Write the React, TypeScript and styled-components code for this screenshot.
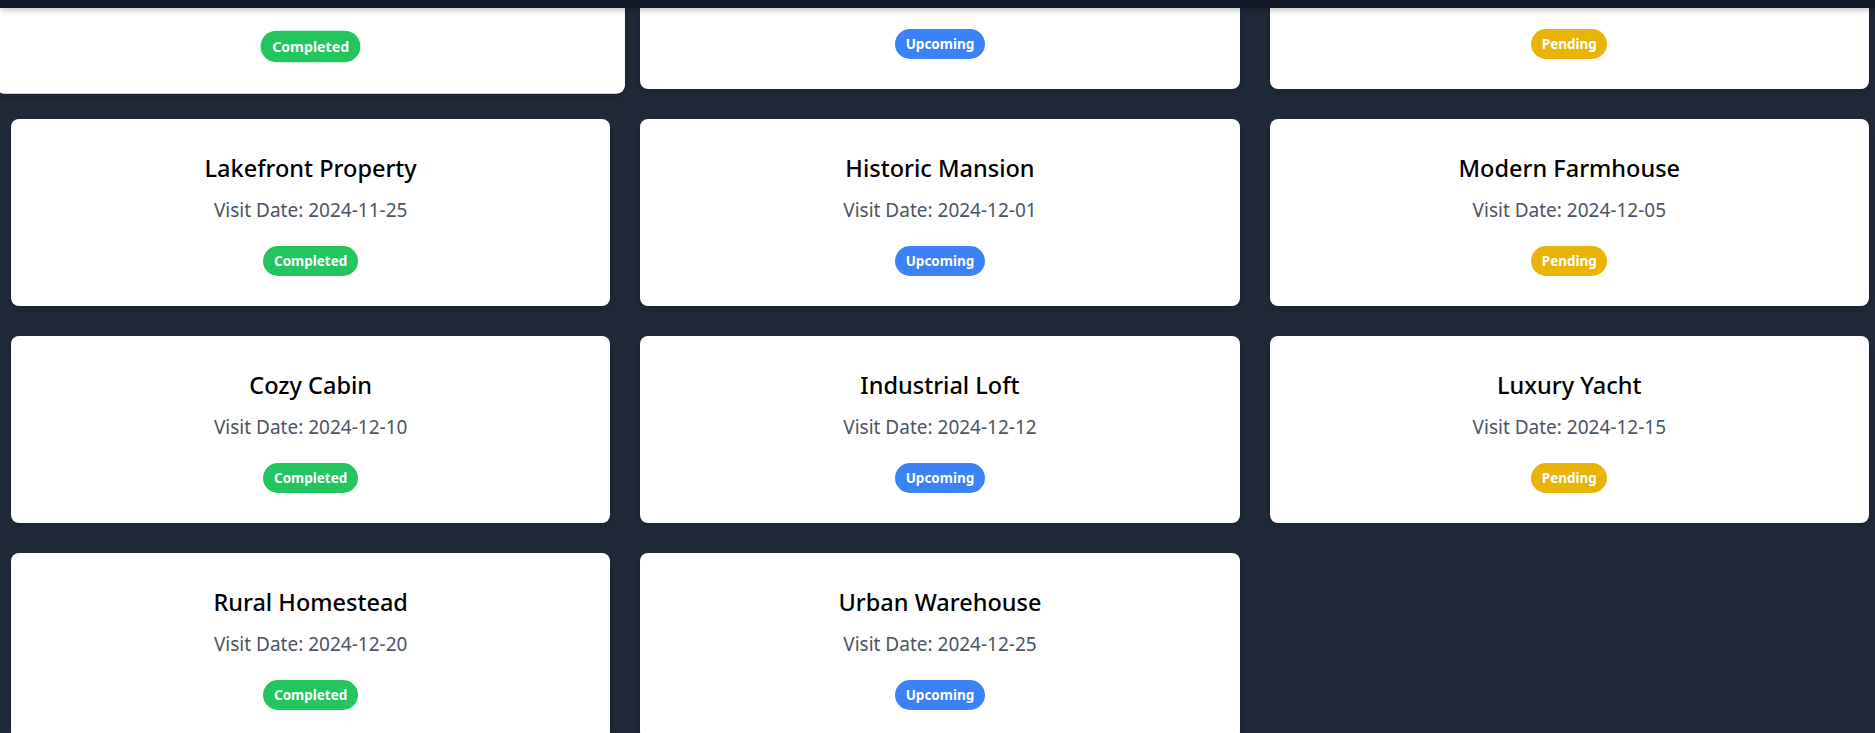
import React from "react";
import styled, { createGlobalStyle } from "styled-components";

type Status = "Completed" | "Upcoming" | "Pending";

interface Visit {
  id: number;
  title: string;
  date: string;
  status: Status;
}

const visits: Visit[] = [
  { id: 1, title: "Beachside Villa", date: "2024-11-10", status: "Completed" },
  { id: 2, title: "Downtown Condo", date: "2024-11-15", status: "Upcoming" },
  { id: 3, title: "Suburban Home", date: "2024-11-20", status: "Pending" },
  { id: 4, title: "Lakefront Property", date: "2024-11-25", status: "Completed" },
  { id: 5, title: "Historic Mansion", date: "2024-12-01", status: "Upcoming" },
  { id: 6, title: "Modern Farmhouse", date: "2024-12-05", status: "Pending" },
  { id: 7, title: "Cozy Cabin", date: "2024-12-10", status: "Completed" },
  { id: 8, title: "Industrial Loft", date: "2024-12-12", status: "Upcoming" },
  { id: 9, title: "Luxury Yacht", date: "2024-12-15", status: "Pending" },
  { id: 10, title: "Rural Homestead", date: "2024-12-20", status: "Completed" },
  { id: 11, title: "Urban Warehouse", date: "2024-12-25", status: "Upcoming" },
];

const statusColors: Record<Status, string> = {
  Completed: "#22c55e",
  Upcoming: "#3b82f6",
  Pending: "#eab308",
};

const GlobalStyle = createGlobalStyle`
  html, body {
    margin: 0;
    padding: 0;
    overflow: hidden;
    background: #1f2937;
    font-family: "Noto Sans", "Open Sans", sans-serif;
  }
  * { box-sizing: border-box; }
`;

const TopBar = styled.header`
  position: fixed;
  top: 0;
  left: 0;
  right: 0;
  height: 8px;
  background: #111827;
  box-shadow: 0 2px 6px rgba(0, 0, 0, 0.25);
  z-index: 10;
`;

const Page = styled.main`
  min-height: 100vh;
  background: #1f2937;
  padding: 0 6px 0 11px;
`;

const Grid = styled.section`
  display: grid;
  grid-template-columns: repeat(3, 1fr);
  gap: 30px;
  margin-top: -98px;
`;

const Card = styled.article<{ $hovered?: boolean }>`
  background: #ffffff;
  border-radius: 8px;
  padding: 33px 24px 30px;
  display: flex;
  flex-direction: column;
  align-items: center;
  text-align: center;
  box-shadow: 0 4px 6px rgba(0, 0, 0, 0.1);
  transform: ${(p) => (p.$hovered ? "scale(1.05)" : "none")};
  transition: transform 0.2s;
`;

const Title = styled.h2`
  margin: 0 0 12px;
  font-size: 23.5px;
  line-height: 32px;
  font-weight: 500;
  color: #000000;
`;

const VisitDate = styled.p`
  margin: 0 0 22px;
  font-size: 19px;
  line-height: 28px;
  font-weight: 400;
  color: #4b5563;
`;

const Badge = styled.span<{ $color: string }>`
  display: inline-flex;
  align-items: center;
  height: 30px;
  padding: 0 10.5px;
  border-radius: 9999px;
  background: ${(p) => p.$color};
  color: #ffffff;
  font-size: 13.5px;
  font-weight: 700;
`;

export default function App() {
  return (
    <>
      <GlobalStyle />
      <TopBar />
      <Page>
        <Grid>
          {visits.map((v, i) => (
            <Card key={v.id} $hovered={i === 0}>
              <Title>{v.title}</Title>
              <VisitDate>Visit Date: {v.date}</VisitDate>
              <Badge $color={statusColors[v.status]}>{v.status}</Badge>
            </Card>
          ))}
        </Grid>
      </Page>
    </>
  );
}
